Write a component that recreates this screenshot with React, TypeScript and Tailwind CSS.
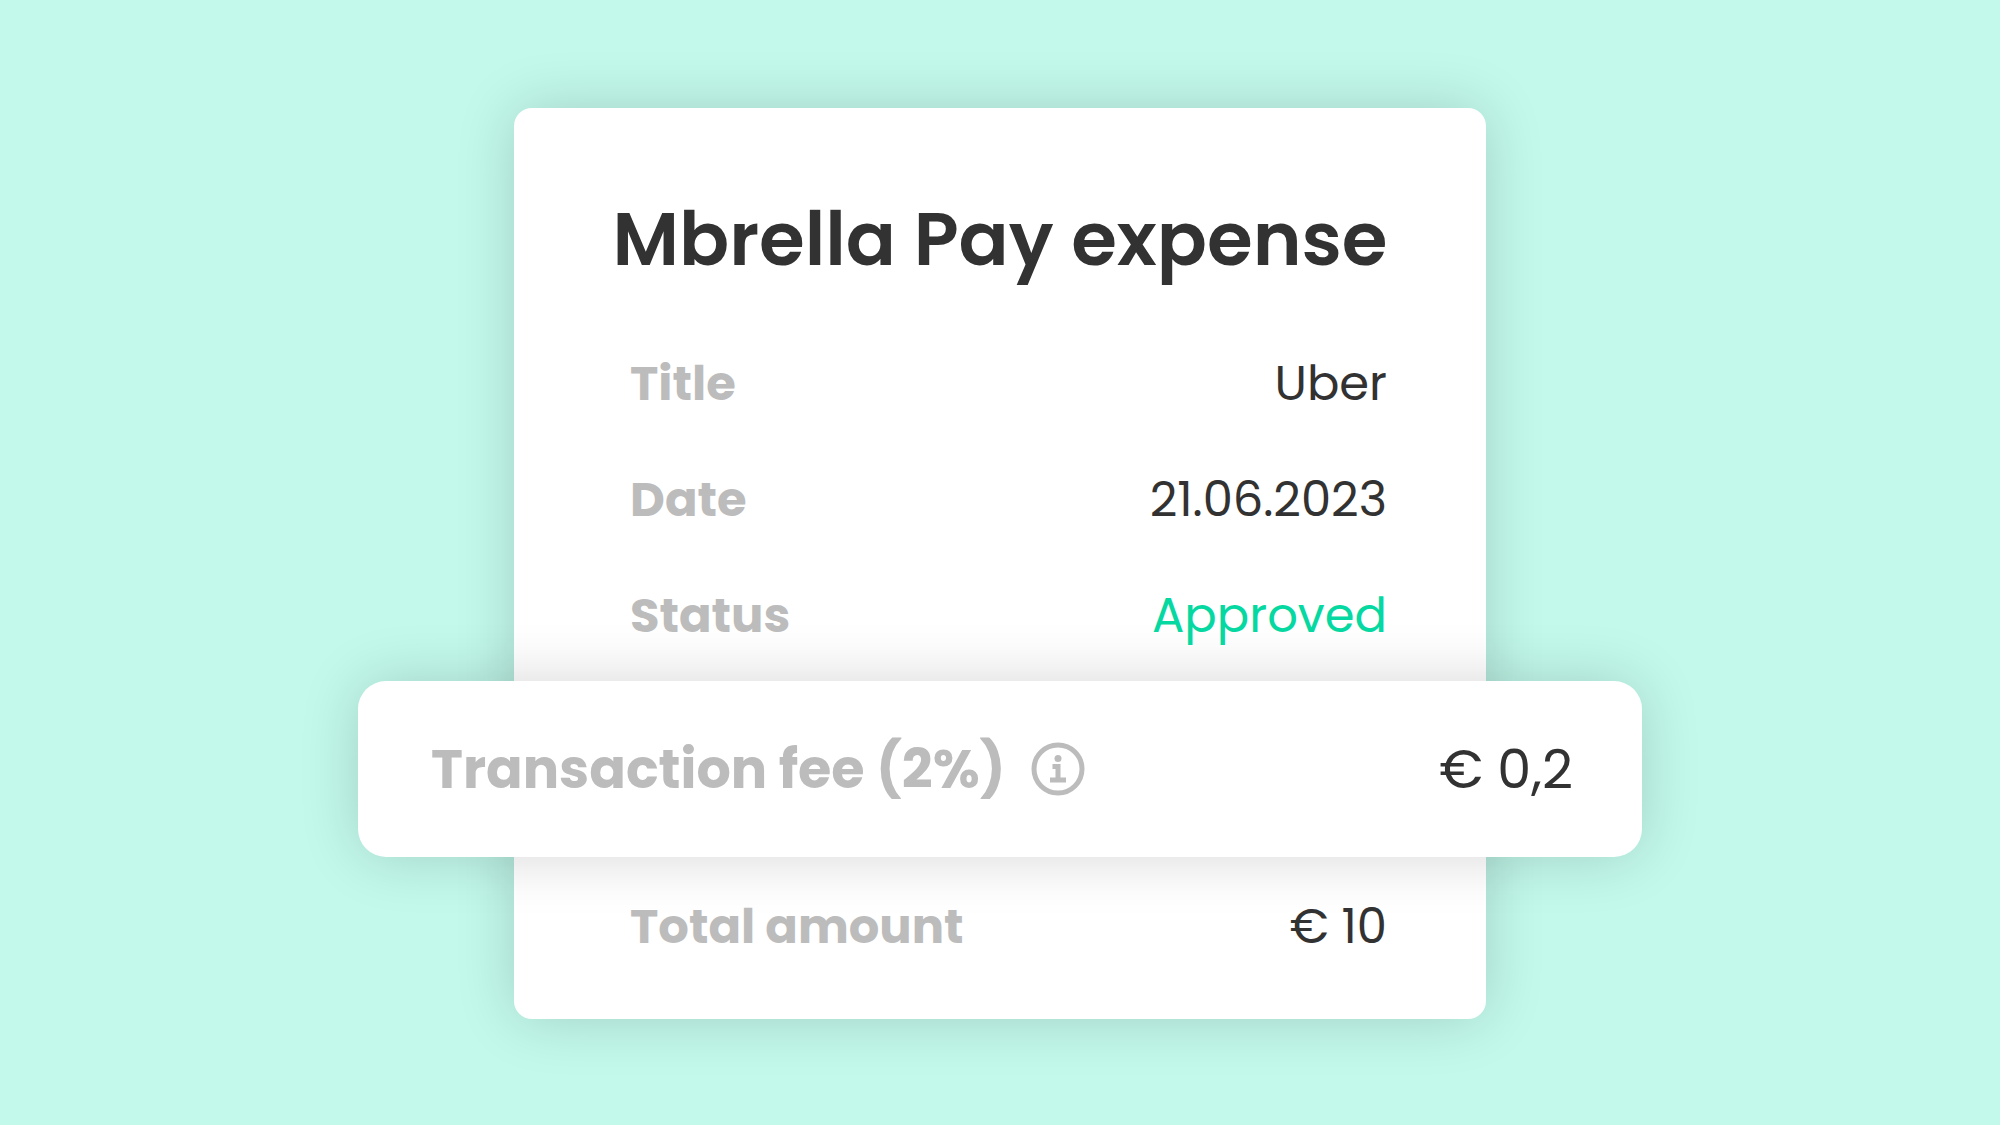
interface Expense {
  title: string;
  date: string;
  status: string;
  fee: string;
  total: string;
}

const expense: Expense = {
  title: 'Uber',
  date: '21.06.2023',
  status: 'Approved',
  fee: '€ 0,2',
  total: '€ 10',
};

interface ExpenseRowProps {
  label: string;
  value: string;
  valueColor?: string;
}

function ExpenseRow({ label, value, valueColor = 'text-[#323232]' }: ExpenseRowProps) {
  return (
    <div className="flex items-baseline justify-between pl-[116px] pr-[99px] text-[48px] leading-[60px]">
      <dt className="font-bold text-[#bcbcbc]">{label}</dt>
      <dd className={valueColor}>{value}</dd>
    </div>
  );
}

function InfoIcon() {
  return (
    <svg className="h-[54px] w-[54px]" viewBox="0 0 54 54" fill="none" aria-hidden="true">
      <circle cx="27" cy="27" r="24" stroke="currentColor" strokeWidth="5" />
      <circle cx="27" cy="16.5" r="3.5" fill="currentColor" />
      <path d="M21.500 22h8v13.500h5.500v5H19v-5h5.500v-8.500h-3z" fill="currentColor" />
    </svg>
  );
}

export default function App() {
  return (
    <main className="flex min-h-screen items-center justify-center bg-[#c2f9eb] px-40 pt-[50px] pb-12 font-['Poppins','Inter',sans-serif]">
      <article className="w-full max-w-[972px] rounded-[18px] bg-white pt-[83px] pb-[62px] shadow-[0_0_60px_rgba(0,0,0,0.16)]">
        <h1 className="px-[98px] text-center text-[74px] leading-[96px] font-semibold whitespace-nowrap text-[#323232]">
          Mbrella Pay expense
        </h1>

        <dl>
          <div className="mt-[67px] flex flex-col gap-14">
            <ExpenseRow label="Title" value={expense.title} />
            <ExpenseRow label="Date" value={expense.date} />
            <ExpenseRow label="Status" value={expense.status} valueColor="text-[#05d8a0]" />
          </div>

          {/* Fee row is wider than the card */}
          <div className="-mx-[156px] mt-[35px] mb-10 flex h-44 items-center justify-between rounded-[28px] bg-white pr-[69px] pl-[73px] text-[54px] leading-[64px] shadow-[0_0_60px_rgba(0,0,0,0.16)]">
            <dt className="flex items-center gap-[26px] font-bold text-[#bcbcbc]">
              Transaction fee (2%)
              <button type="button" aria-label="About the transaction fee">
                <InfoIcon />
              </button>
            </dt>
            <dd className="text-[#323232]">{expense.fee}</dd>
          </div>

          <ExpenseRow label="Total amount" value={expense.total} />
        </dl>
      </article>
    </main>
  );
}
